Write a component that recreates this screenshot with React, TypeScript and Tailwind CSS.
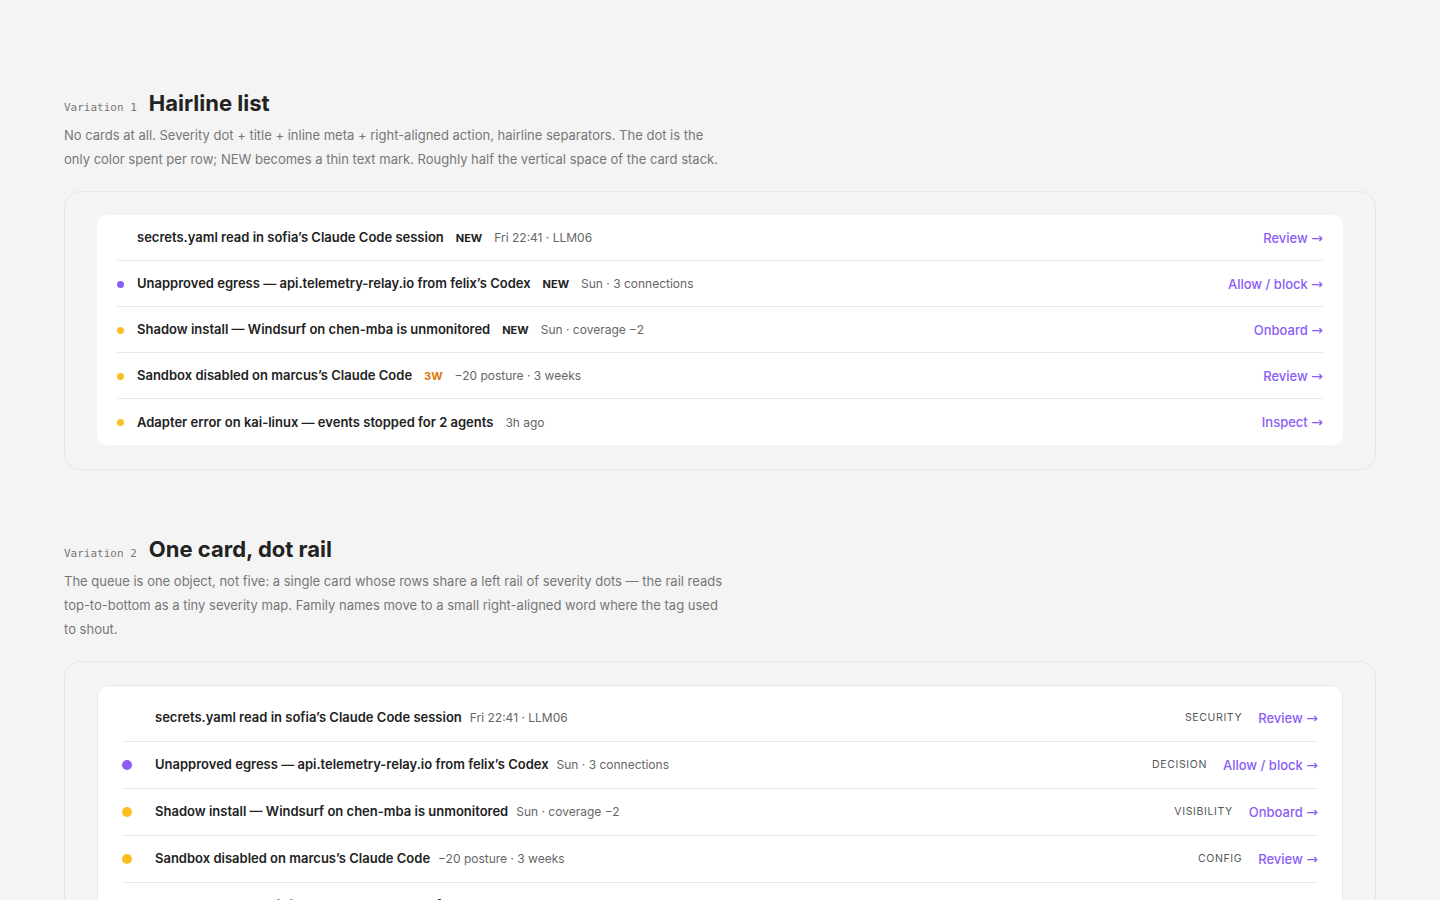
import React from 'react';

type Severity = 'critical' | 'high' | 'medium';

interface QueueItem {
  id: string;
  title: string;
  tag?: { label: string; tone: 'new' | 'age' };
  meta: string;
  family: string;
  action: string;
  severity: Severity;
}

const items: QueueItem[] = [
  {
    id: 'secrets',
    title: 'secrets.yaml read in sofia’s Claude Code session',
    tag: { label: 'NEW', tone: 'new' },
    meta: 'Fri 22:41 · LLM06',
    family: 'Security',
    action: 'Review',
    severity: 'critical',
  },
  {
    id: 'egress',
    title: 'Unapproved egress — api.telemetry-relay.io from felix’s Codex',
    tag: { label: 'NEW', tone: 'new' },
    meta: 'Sun · 3 connections',
    family: 'Decision',
    action: 'Allow / block',
    severity: 'high',
  },
  {
    id: 'shadow',
    title: 'Shadow install — Windsurf on chen-mba is unmonitored',
    tag: { label: 'NEW', tone: 'new' },
    meta: 'Sun · coverage −2',
    family: 'Visibility',
    action: 'Onboard',
    severity: 'medium',
  },
  {
    id: 'sandbox',
    title: 'Sandbox disabled on marcus’s Claude Code',
    tag: { label: '3W', tone: 'age' },
    meta: '−20 posture · 3 weeks',
    family: 'Config',
    action: 'Review',
    severity: 'medium',
  },
  {
    id: 'adapter',
    title: 'Adapter error on kai-linux — events stopped for 2 agents',
    meta: '3h ago',
    family: 'Health',
    action: 'Inspect',
    severity: 'medium',
  },
];

// critical rows carry no dot in this palette
const dotColor: Record<Severity, string> = {
  critical: 'bg-transparent',
  high: 'bg-[#8b5cf6]',
  medium: 'bg-[#fbbf24]',
};

const SectionHeader: React.FC<{ n: number; title: string; children: React.ReactNode }> = ({ n, title, children }) => (
  <div>
    <div className="flex items-baseline gap-3">
      <span className="font-['DejaVu_Sans_Mono',monospace] text-[11px] text-[#777]">Variation {n}</span>
      <h2 className="text-[22px] leading-[28px] font-bold text-[#222]">{title}</h2>
    </div>
    <p className="mt-1.5 max-w-[665px] text-[13px] leading-6 text-[#777]">{children}</p>
  </div>
);

const Frame: React.FC<{ children: React.ReactNode }> = ({ children }) => (
  <div className="mt-5 rounded-2xl border border-[#e6e6e6] px-8 pt-[23px] pb-6">{children}</div>
);

const Action: React.FC<{ label: string }> = ({ label }) => (
  <a className="shrink-0 text-[13px] font-medium text-[#8b5cf6]">
    {label} <span className="font-['DejaVu_Sans',sans-serif] text-[14px]">→</span>
  </a>
);

const HairlineList = () => (
  <div className="rounded-[10px] bg-white px-5">
    {items.map((item, i) => (
      <div
        key={item.id}
        className={`flex h-[46px] items-center pt-px ${i < items.length - 1 ? 'border-b border-[#e8e8e8]' : ''}`}
      >
        <span className={`h-[7px] w-[7px] shrink-0 rounded-full ${dotColor[item.severity]}`} />
        <div className="ml-[13px] flex min-w-0 flex-1 items-center gap-3">
          <span className="text-[13px] font-semibold text-[#222]">{item.title}</span>
          {item.tag && (
            <span
              className={`text-[11px] font-bold ${item.tag.tone === 'new' ? 'text-[#222]' : 'text-[#d97706]'}`}
            >
              {item.tag.label}
            </span>
          )}
          <span className="text-[12px] text-[#666]">{item.meta}</span>
        </div>
        <Action label={item.action} />
      </div>
    ))}
  </div>
);

const DotRailCard = () => (
  <div className="rounded-xl border border-[#e8e8e8] bg-white px-6 pt-[9px]">
    {items.map((item) => (
      <div key={item.id} className="flex h-[47px] items-center border-b border-[#e8e8e8]">
        <div className="w-[33px] shrink-0">
          <span className={`block h-[10px] w-[10px] rounded-full ${dotColor[item.severity]}`} />
        </div>
        <div className="flex min-w-0 flex-1 items-center gap-2">
          <span className="text-[13px] font-semibold text-[#222]">{item.title}</span>
          <span className="text-[12px] text-[#666]">{item.meta}</span>
        </div>
        <div className="flex shrink-0 items-center gap-4">
          <span className="text-[10.5px] uppercase tracking-[0.06em] text-[#555]">{item.family}</span>
          <Action label={item.action} />
        </div>
      </div>
    ))}
  </div>
);

export default function App() {
  return (
    <div className="min-h-screen bg-[#f4f4f4] px-16 pt-[89px] pb-24 font-['Inter',sans-serif] antialiased">
      <SectionHeader n={1} title="Hairline list">
        No cards at all. Severity dot + title + inline meta + right-aligned action, hairline separators. The dot is the
        only color spent per row; NEW becomes a thin text mark. Roughly half the vertical space of the card stack.
      </SectionHeader>
      <Frame>
        <HairlineList />
      </Frame>

      <div className="mt-[65px]">
        <SectionHeader n={2} title="One card, dot rail">
          The queue is one object, not five: a single card whose rows share a left rail of severity dots — the rail reads
          top-to-bottom as a tiny severity map. Family names move to a small right-aligned word where the tag used to
          shout.
        </SectionHeader>
        <Frame>
          <DotRailCard />
        </Frame>
      </div>
    </div>
  );
}
